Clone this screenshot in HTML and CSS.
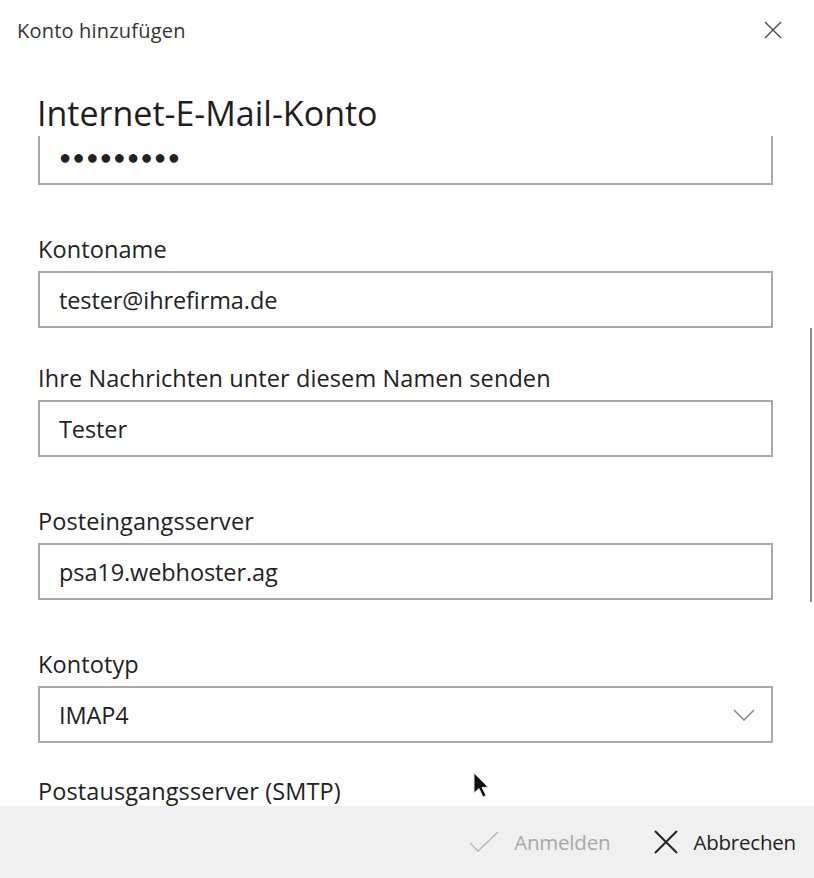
FILE: index.html
```html
<!DOCTYPE html>
<html lang="de">
<head>
    <meta charset="UTF-8">
    <meta name="viewport" content="width=device-width, initial-scale=1.0">
    <title>Konto hinzufügen</title>
    <link rel="stylesheet" href="styles.css">
</head>
<body>
    <div class="dialog">
        <div class="titlebar">
            <span class="title">Konto hinzufügen</span>
            <svg class="close" width="18" height="18" viewBox="0 0 18 18">
                <path d="M1 1 L17 17 M17 1 L1 17" stroke="#444" stroke-width="1.3" fill="none"/>
            </svg>
        </div>

        <h1 class="heading">Internet-E-Mail-Konto</h1>

        <div class="scroll-area">
            <div class="form">
                <div class="field first">
                    <div class="box password">&#9679;&#9679;&#9679;&#9679;&#9679;&#9679;&#9679;&#9679;&#9679;</div>
                </div>
                <div class="field">
                    <label>Kontoname</label>
                    <div class="box">tester@ihrefirma.de</div>
                </div>
                <div class="field tight">
                    <label>Ihre Nachrichten unter diesem Namen senden</label>
                    <div class="box">Tester</div>
                </div>
                <div class="field">
                    <label>Posteingangsserver</label>
                    <div class="box">psa19.webhoster.ag</div>
                </div>
                <div class="field">
                    <label>Kontotyp</label>
                    <div class="box select">
                        <span>IMAP4</span>
                        <svg width="22" height="12" viewBox="0 0 22 12">
                            <path d="M1 1 L11 11 L21 1" stroke="#888" stroke-width="1.5" fill="none"/>
                        </svg>
                    </div>
                </div>
                <div class="field last">
                    <label>Postausgangsserver (SMTP)</label>
                </div>
            </div>
            <div class="scrollbar"></div>
            <svg class="cursor" width="20" height="30" viewBox="0 0 20 30">
                <path d="M2 1 L2 21 L7 16.5 L11 25 L14 23.5 L10 15.5 L16 15 Z" fill="#111" stroke="#ddd" stroke-width="1"/>
            </svg>
        </div>

        <div class="footer">
            <button class="action disabled">
                <svg width="30" height="22" viewBox="0 0 30 22">
                    <path d="M1 12 L9 20 L29 1" stroke="#b8b8b8" stroke-width="1.5" fill="none"/>
                </svg>
                Anmelden
            </button>
            <button class="action">
                <svg width="24" height="24" viewBox="0 0 24 24">
                    <path d="M1 1 L23 23 M23 1 L1 23" stroke="#222" stroke-width="2" fill="none"/>
                </svg>
                Abbrechen
            </button>
        </div>
    </div>
</body>
</html>
```

FILE: styles.css
```css
body {
    margin: 0;
    background: white;
    font-family: "Open Sans", "Noto Sans", Arial, sans-serif;
    color: #222;
}
.dialog {
    width: 814px;
    height: 878px;
    display: flex;
    flex-direction: column;
    overflow: hidden;
}
.titlebar {
    display: flex;
    justify-content: space-between;
    align-items: center;
    height: 60px;
    padding: 0 32px 0 17px;
}
.title {
    font-size: 20px;
    color: #333;
    letter-spacing: 0.2px;
}
.heading {
    margin: 30px 0 0 37px;
    font-size: 34px;
    font-weight: 400;
    line-height: 46px;
    color: #1e1e1e;
}
.scroll-area {
    position: relative;
    flex: 1;
    overflow: hidden;
}
.form {
    margin-top: -8px;
    padding: 0 41px 0 38px;
}
.field {
    margin-top: 50px;
}
.field.first {
    margin-top: 0;
}
.field.tight {
    margin-top: 36px;
}
.field.last {
    margin-top: 34px;
}
label {
    display: block;
    font-size: 23.5px;
    line-height: 28px;
    letter-spacing: 0.1px;
    margin-bottom: 8px;
    color: #222;
}
.box {
    height: 53px;
    border: 2px solid #a9a9a9;
    display: flex;
    align-items: center;
    padding: 0 19px;
    font-size: 23.5px;
    letter-spacing: -0.1px;
    color: #222;
}
.password {
    font-size: 20px;
    letter-spacing: 1.5px;
}
.select {
    justify-content: space-between;
    padding-right: 16px;
}
.scrollbar {
    position: absolute;
    right: 2px;
    top: 192px;
    width: 2px;
    height: 274px;
    background: #8a8a8a;
}
.cursor {
    position: absolute;
    left: 472px;
    top: 636px;
}
.footer {
    height: 72px;
    background: #f0f0f0;
    display: flex;
    justify-content: flex-end;
    align-items: center;
    gap: 44px;
    padding-right: 18px;
}
.action {
    display: flex;
    align-items: center;
    gap: 15px;
    border: none;
    background: none;
    padding: 0;
    font-family: inherit;
    font-size: 20.5px;
    letter-spacing: -0.2px;
    color: #222;
}
.action.disabled {
    color: #a8a8a8;
}
```
